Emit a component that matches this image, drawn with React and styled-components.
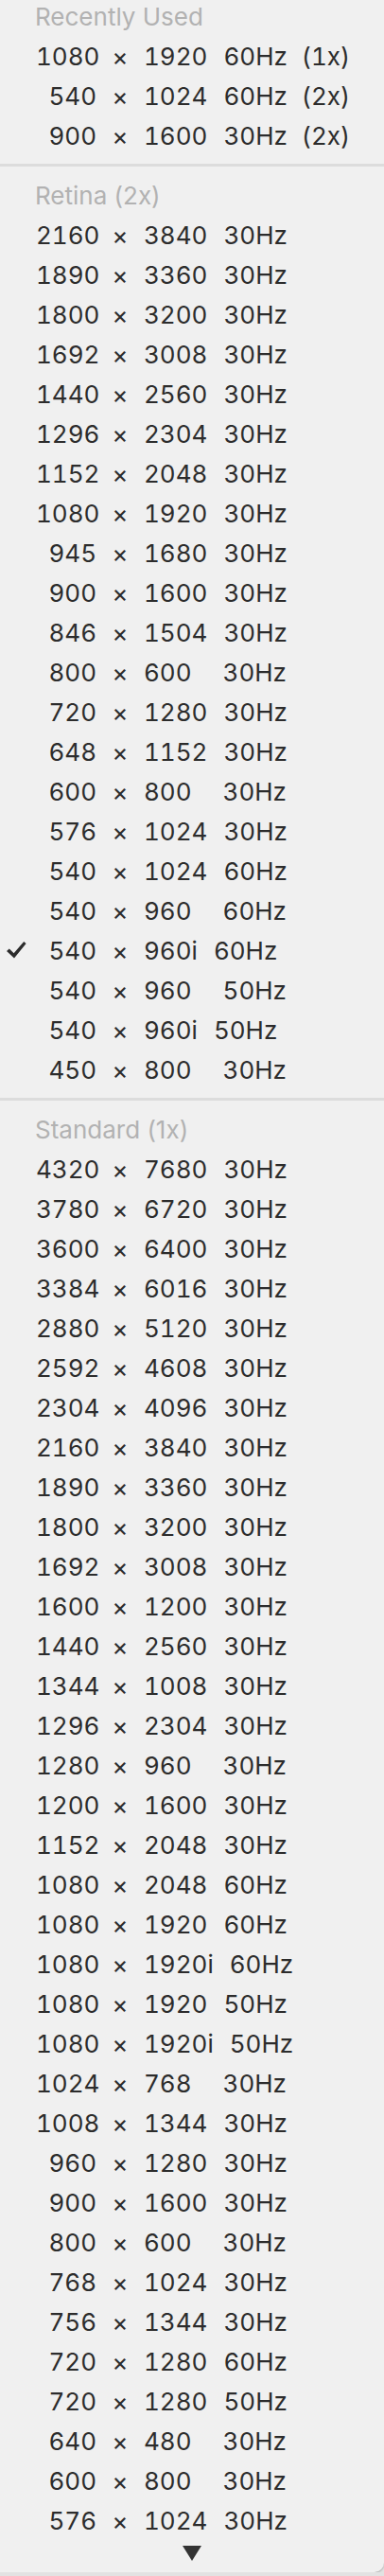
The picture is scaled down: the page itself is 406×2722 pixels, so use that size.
import React from "react";
import styled, { createGlobalStyle } from "styled-components";

const GlobalStyle = createGlobalStyle`
  html, body {
    margin: 0;
    padding: 0;
    background: #e2e2e2;
  }
  body {
    font-family: "Inter", "Liberation Sans", sans-serif;
    -webkit-font-smoothing: antialiased;
  }
`;

const sections = [
  {
    title: "Recently Used",
    items: [
      { w: "1080", h: "1920", hz: "60Hz", scale: "(1x)" },
      { w: "540", h: "1024", hz: "60Hz", scale: "(2x)" },
      { w: "900", h: "1600", hz: "30Hz", scale: "(2x)" },
    ],
  },
  {
    title: "Retina (2x)",
    items: [
      { w: "2160", h: "3840", hz: "30Hz" },
      { w: "1890", h: "3360", hz: "30Hz" },
      { w: "1800", h: "3200", hz: "30Hz" },
      { w: "1692", h: "3008", hz: "30Hz" },
      { w: "1440", h: "2560", hz: "30Hz" },
      { w: "1296", h: "2304", hz: "30Hz" },
      { w: "1152", h: "2048", hz: "30Hz" },
      { w: "1080", h: "1920", hz: "30Hz" },
      { w: "945", h: "1680", hz: "30Hz" },
      { w: "900", h: "1600", hz: "30Hz" },
      { w: "846", h: "1504", hz: "30Hz" },
      { w: "800", h: "600", hz: "30Hz" },
      { w: "720", h: "1280", hz: "30Hz" },
      { w: "648", h: "1152", hz: "30Hz" },
      { w: "600", h: "800", hz: "30Hz" },
      { w: "576", h: "1024", hz: "30Hz" },
      { w: "540", h: "1024", hz: "60Hz" },
      { w: "540", h: "960", hz: "60Hz" },
      { w: "540", h: "960i", hz: "60Hz", checked: true },
      { w: "540", h: "960", hz: "50Hz" },
      { w: "540", h: "960i", hz: "50Hz" },
      { w: "450", h: "800", hz: "30Hz" },
    ],
  },
  {
    title: "Standard (1x)",
    items: [
      { w: "4320", h: "7680", hz: "30Hz" },
      { w: "3780", h: "6720", hz: "30Hz" },
      { w: "3600", h: "6400", hz: "30Hz" },
      { w: "3384", h: "6016", hz: "30Hz" },
      { w: "2880", h: "5120", hz: "30Hz" },
      { w: "2592", h: "4608", hz: "30Hz" },
      { w: "2304", h: "4096", hz: "30Hz" },
      { w: "2160", h: "3840", hz: "30Hz" },
      { w: "1890", h: "3360", hz: "30Hz" },
      { w: "1800", h: "3200", hz: "30Hz" },
      { w: "1692", h: "3008", hz: "30Hz" },
      { w: "1600", h: "1200", hz: "30Hz" },
      { w: "1440", h: "2560", hz: "30Hz" },
      { w: "1344", h: "1008", hz: "30Hz" },
      { w: "1296", h: "2304", hz: "30Hz" },
      { w: "1280", h: "960", hz: "30Hz" },
      { w: "1200", h: "1600", hz: "30Hz" },
      { w: "1152", h: "2048", hz: "30Hz" },
      { w: "1080", h: "2048", hz: "60Hz" },
      { w: "1080", h: "1920", hz: "60Hz" },
      { w: "1080", h: "1920i", hz: "60Hz" },
      { w: "1080", h: "1920", hz: "50Hz" },
      { w: "1080", h: "1920i", hz: "50Hz" },
      { w: "1024", h: "768", hz: "30Hz" },
      { w: "1008", h: "1344", hz: "30Hz" },
      { w: "960", h: "1280", hz: "30Hz" },
      { w: "900", h: "1600", hz: "30Hz" },
      { w: "800", h: "600", hz: "30Hz" },
      { w: "768", h: "1024", hz: "30Hz" },
      { w: "756", h: "1344", hz: "30Hz" },
      { w: "720", h: "1280", hz: "60Hz" },
      { w: "720", h: "1280", hz: "50Hz" },
      { w: "640", h: "480", hz: "30Hz" },
      { w: "600", h: "800", hz: "30Hz" },
      { w: "576", h: "1024", hz: "30Hz" },
    ],
  },
];

const Menu = styled.div`
  margin-top: -4px;
  background: #f0f0f0;
  border-bottom-right-radius: 10px;
  box-shadow: 0 1px 2px rgba(0, 0, 0, 0.25);
  color: #2c2c2c;
  font-size: 26px;
`;

const Header = styled.div`
  height: 42px;
  display: flex;
  align-items: center;
  padding-left: 37px;
  color: #b2b2b2;
`;

const Separator = styled.div`
  height: 21px;
  display: flex;
  align-items: center;

  &::after {
    content: "";
    flex: 1;
    height: 3px;
    background: #dcdcdc;
  }
`;

const Row = styled.div`
  height: 42px;
  display: flex;
  align-items: center;
  font-variant-numeric: tabular-nums;
  white-space: nowrap;
`;

const Gutter = styled.span`
  width: 38px;
  display: flex;
  align-items: center;
  padding-left: 6px;
  box-sizing: border-box;
`;

const Width = styled.span`
  width: 64px;
  text-align: right;
`;

const Times = styled.span`
  width: 50px;
  text-align: center;
`;

const Height = styled.span`
  padding-right: ${({ $short }) => ($short ? "16px" : "0")};
`;

const Rate = styled.span`
  margin-left: 17px;
`;

const Scale = styled.span`
  margin-left: 15px;
`;

const More = styled.div`
  height: 34px;
  display: flex;
  justify-content: center;
  padding-top: 6px;
  box-sizing: border-box;
`;

const Check = () => (
  <svg width="22" height="20" viewBox="0 0 22 20">
    <path d="M1 11 L3.8 8.4 L8.6 13.2 L19.2 1 L21.6 3.1 L9 18.6 Z" fill="#2c2c2c" />
  </svg>
);

const Arrow = () => (
  <svg width="20" height="16" viewBox="0 0 20 16">
    <path d="M0 0 H20 L10 16 Z" fill="#333" />
  </svg>
);

const Item = ({ item }) => (
  <Row>
    <Gutter>{item.checked && <Check />}</Gutter>
    <Width>{item.w}</Width>
    <Times>×</Times>
    <Height $short={/^\d{3}$/.test(item.h)}>{item.h}</Height>
    <Rate>{item.hz}</Rate>
    {item.scale && <Scale>{item.scale}</Scale>}
  </Row>
);

export default function App() {
  return (
    <>
      <GlobalStyle />
      <Menu>
        {sections.map((section, i) => (
          <React.Fragment key={section.title}>
            {i > 0 && <Separator />}
            <Header>{section.title}</Header>
            {section.items.map((item, j) => (
              <Item key={j} item={item} />
            ))}
          </React.Fragment>
        ))}
        <More>
          <Arrow />
        </More>
      </Menu>
    </>
  );
}
